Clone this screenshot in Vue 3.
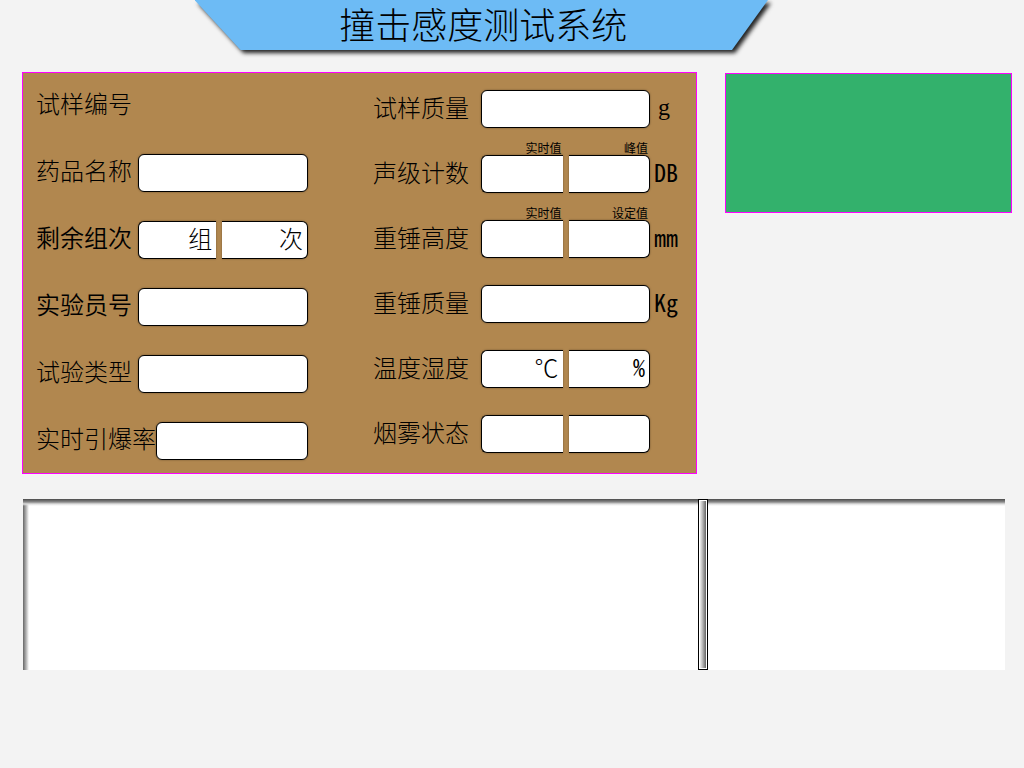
<script setup>
import { reactive } from 'vue'

const leftRows = [
  { id: 'sample', label: '试样编号', cells: [] },
  { id: 'drug', label: '药品名称', cells: [{}] },
  { id: 'remain', label: '剩余组次', strong: true, cells: [{ suffix: '组' }, { suffix: '次' }] },
  { id: 'operator', label: '实验员号', strong: true, cells: [{}] },
  { id: 'type', label: '试验类型', cells: [{}] },
  { id: 'rate', label: '实时引爆率', cells: [{}] },
]

const rightRows = [
  { id: 'mass', label: '试样质量', unit: 'g', serif: true, cells: [{}] },
  { id: 'sound', label: '声级计数', unit: 'DB', cells: [{ caption: '实时值' }, { caption: '峰值' }] },
  { id: 'height', label: '重锤高度', unit: 'mm', cells: [{ caption: '实时值' }, { caption: '设定值' }] },
  { id: 'hammer', label: '重锤质量', unit: 'Kg', cells: [{}] },
  { id: 'climate', label: '温度湿度', cells: [{ suffix: '℃' }, { suffix: '%', latin: true }] },
  { id: 'smoke', label: '烟雾状态', cells: [{}, {}] },
]

const columns = [
  { name: 'left', rows: leftRows },
  { name: 'right', rows: rightRows },
]

const values = reactive({})
</script>

<template>
  <div class="page">
    <header class="banner">
      <div class="shape"><div class="plate"></div></div>
      <h1 class="title">撞击感度测试系统</h1>
    </header>

    <main>
      <div class="top">
        <form class="panel" @submit.prevent>
          <div v-for="col in columns" :key="col.name" class="column" :class="col.name">
            <div v-for="row in col.rows" :key="row.id" class="row">
              <label v-if="row.cells.length" class="name" :class="{ strong: row.strong }" :for="row.id + '-0'">{{ row.label }}</label>
              <span v-else class="name">{{ row.label }}</span>
              <div v-if="row.cells.length" class="boxes">
                <div v-for="(cell, i) in row.cells" :key="i" class="box">
                  <label v-if="cell.caption" class="caption" :for="row.id + '-' + i">{{ cell.caption }}</label>
                  <input :id="row.id + '-' + i" v-model="values[row.id + i]" type="text" :aria-label="row.label" />
                  <span v-if="cell.suffix" class="suffix" :class="{ latin: cell.latin }">{{ cell.suffix }}</span>
                </div>
              </div>
              <span v-if="col.name === 'right'" class="unit" :class="{ serif: row.serif }">{{ row.unit }}</span>
            </div>
          </div>
        </form>
        <section class="status"></section>
      </div>

      <div class="log">
        <section class="pane first"></section>
        <div class="splitter"><div class="grip"></div></div>
        <section class="pane"></section>
      </div>
    </main>
  </div>
</template>

<style>
body {
  background: #f3f3f3;
}
</style>

<style scoped>
.page {
  min-height: 100vh;
  box-sizing: border-box;
  color: #000;
  font-family: "KaiTi", "Noto Sans CJK SC", sans-serif;
  font-weight: 300;
}

.banner {
  position: relative;
  width: 56%;
  height: 50px;
  margin-left: 19%;
}

.shape {
  position: absolute;
  inset: 0;
  filter: drop-shadow(3px 3px 2px #222);
}

.plate {
  height: 100%;
  background: #6dbbf5;
  clip-path: polygon(0 0, 100% 0, calc(100% - 36px) 100%, 46px 100%);
}

.title {
  position: relative;
  margin: 0;
  padding-left: 4px;
  font-size: 36px;
  line-height: 46px;
  font-weight: 300;
  text-align: center;
}

main {
  padding: 22px 12px 0 22px;
}

.top {
  display: grid;
  grid-template-columns: 675fr 287fr;
  gap: 28px;
  align-items: start;
}

.panel {
  display: grid;
  grid-template-columns: 272fr 323fr;
  column-gap: 65px;
  padding: 14px 0 13px 13px;
  background: #b1874f;
  border: 1px solid #f0f;
}

.column {
  display: flex;
  flex-direction: column;
  gap: 29px;
}

.column.right {
  gap: 27px;
  padding-top: 3px;
}

.row {
  display: flex;
  align-items: center;
  height: 38px;
}

.name {
  flex: none;
  min-width: 102px;
  padding-bottom: 6px;
  font-size: 24px;
  line-height: 32px;
  white-space: nowrap;
}

.right .name {
  min-width: 108px;
  padding-bottom: 4px;
}

.strong {
  font-weight: 350;
}

.boxes {
  flex: 1;
  min-width: 0;
  display: flex;
  gap: 6px;
}

.box {
  position: relative;
  flex: 1;
  min-width: 0;
  display: flex;
  align-items: center;
  height: 38px;
  box-sizing: border-box;
  background: #fff;
  border: 1px solid #000;
  border-radius: 6px;
  box-shadow: 0 0 2px rgba(0, 0, 0, 0.4);
}

.box:not(:last-child) {
  border-right: 0;
  border-top-right-radius: 0;
  border-bottom-right-radius: 0;
}

.left .box:not(:first-child) {
  flex-grow: 1.1;
}

.box:not(:first-child) {
  border-left: 0;
  border-top-left-radius: 0;
  border-bottom-left-radius: 0;
}

.box input {
  flex: 1;
  width: 0;
  min-width: 0;
  height: 100%;
  box-sizing: border-box;
  padding: 0 6px;
  border: 0;
  outline: 0;
  background: transparent;
  font: inherit;
  font-size: 20px;
}

.caption {
  position: absolute;
  right: 1px;
  bottom: 100%;
  font-size: 12px;
  line-height: 16px;
  font-weight: 400;
  white-space: nowrap;
}

.suffix {
  padding: 0 4px 4px 0;
  font-size: 24px;
  line-height: 32px;
}

.unit {
  flex: none;
  box-sizing: border-box;
  width: 46px;
  padding: 0 0 4px 4px;
}

.unit,
.suffix.latin {
  font-family: "Noto Sans Mono CJK SC", "DejaVu Sans Mono", monospace;
  font-size: 24px;
  line-height: 32px;
  font-weight: 400;
}

.unit.serif {
  padding-left: 8px;
  font-family: "Liberation Serif", serif;
}

.status {
  height: 140px;
  margin-top: 1px;
  box-sizing: border-box;
  background: #33b16c;
  border: 1px solid #f0f;
}

.log {
  display: grid;
  grid-template-columns: 675fr 10px 297fr;
  height: 171px;
  margin: 25px 7px 0 1px;
}

.pane {
  background: linear-gradient(#4a4a4a, #8a8a8a 3px, #dedede 5px, transparent 7px), #fff;
}

.pane.first {
  background:
    linear-gradient(#4a4a4a, #8a8a8a 3px, #dedede 5px, transparent 7px),
    linear-gradient(90deg, #666, #b0b0b0 3px, transparent 6px),
    #fff;
}

.splitter {
  padding: 1px;
  background: #fff;
  border: 1px solid #000;
}

.grip {
  height: 100%;
  background: linear-gradient(90deg, #eee, #bbb 40%, #666);
}
</style>
